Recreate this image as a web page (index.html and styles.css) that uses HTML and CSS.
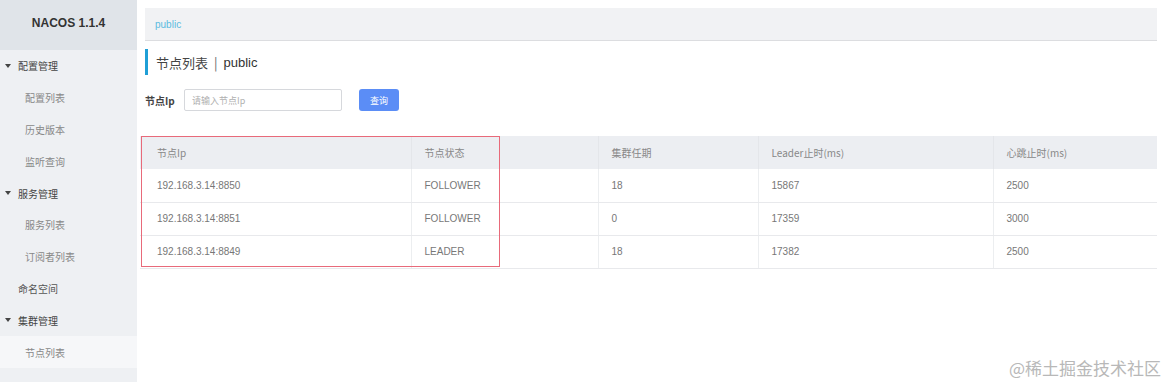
FILE: index.html
```html
<!DOCTYPE html>
<html lang="zh-CN">
<head>
<meta charset="utf-8">
<title>NACOS 1.1.4</title>
<link rel="stylesheet" href="styles.css">
</head>
<body>
<div class="app">
  <aside class="sidebar">
    <div class="brand">NACOS 1.1.4</div>
    <ul class="menu">
      <li class="group"><span class="caret"></span>配置管理</li>
      <li class="sub">配置列表</li>
      <li class="sub">历史版本</li>
      <li class="sub">监听查询</li>
      <li class="group"><span class="caret"></span>服务管理</li>
      <li class="sub">服务列表</li>
      <li class="sub">订阅者列表</li>
      <li class="top">命名空间</li>
      <li class="group"><span class="caret"></span>集群管理</li>
      <li class="sub active">节点列表</li>
    </ul>
  </aside>
  <main class="main">
    <div class="crumb">public</div>
    <h1 class="title">节点列表 <span class="sep">|</span> <span class="ns">public</span></h1>
    <div class="search">
      <label class="search-label">节点Ip</label>
      <input class="search-input" type="text" placeholder="请输入节点Ip">
      <button class="search-btn">查询</button>
    </div>
    <div class="table-wrap">
      <table class="table">
        <thead>
          <tr>
            <th class="c1">节点Ip</th>
            <th class="c2">节点状态</th>
            <th class="c3">集群任期</th>
            <th class="c4">Leader止时(ms)</th>
            <th class="c5">心跳止时(ms)</th>
          </tr>
        </thead>
        <tbody>
          <tr><td class="c1">192.168.3.14:8850</td><td>FOLLOWER</td><td>18</td><td>15867</td><td>2500</td></tr>
          <tr><td class="c1">192.168.3.14:8851</td><td>FOLLOWER</td><td>0</td><td>17359</td><td>3000</td></tr>
          <tr><td class="c1">192.168.3.14:8849</td><td>LEADER</td><td>18</td><td>17382</td><td>2500</td></tr>
        </tbody>
      </table>
      <div class="highlight"></div>
    </div>
    <div class="watermark">@稀土掘金技术社区</div>
  </main>
</div>
</body>
</html>
```

FILE: styles.css
```css
* { box-sizing: border-box; }
html, body {
  margin: 0;
  padding: 0;
  background: #fff;
  width: 1170px;
  height: 386px;
  overflow: hidden;
  font-family: "Liberation Sans", "Noto Sans CJK SC", sans-serif;
}
.app {
  display: flex;
  height: 386px;
}
.sidebar {
  width: 137px;
  height: 382px;
  background: #eef0f3;
  flex: none;
}
.brand {
  height: 50px;
  background: #e0e4e9;
  display: flex;
  align-items: center;
  justify-content: center;
  font-size: 12px;
  font-weight: bold;
  color: #333;
  padding-bottom: 5px;
}
.menu {
  list-style: none;
  margin: 0;
  padding: 0;
}
.menu li {
  height: 31.8px;
  display: flex;
  align-items: center;
  font-size: 10px;
  color: #888;
  font-family: "Noto Sans CJK SC", sans-serif;
}
.menu .group {
  padding-left: 5px;
  color: #444;
}
.caret {
  width: 0;
  height: 0;
  border-left: 3px solid transparent;
  border-right: 3px solid transparent;
  border-top: 4px solid #444;
  margin-right: 7px;
}
.menu .sub { padding-left: 25px; }
.menu .top { padding-left: 18px; color: #555; }
.menu .active { background: #f6f7f9; }

.main {
  flex: 1;
  padding: 8px 13px 0 3px;
  position: relative;
}
.crumb {
  margin-left: 5px;
  height: 33px;
  background: #f1f2f4;
  border-bottom: 1px solid #dcdde0;
  display: flex;
  align-items: center;
  padding-left: 10px;
  font-size: 10px;
  color: #5cbbe0;
}
.title {
  margin: 8px 0 0 5px;
  height: 26px;
  border-left: 3px solid #1f9fd6;
  padding-left: 8px;
  display: flex;
  align-items: center;
  font-size: 13px;
  font-weight: normal;
  color: #444;
  font-family: "Noto Sans CJK SC", sans-serif;
}
.sep { margin: 0 6px; color: #666; }
.ns { font-family: "Liberation Sans", sans-serif; color: #333; }
.search {
  margin: 14px 0 0 5px;
  display: flex;
  align-items: center;
  height: 22px;
}
.search-label {
  font-size: 10px;
  font-weight: bold;
  color: #444;
  width: 39px;
  font-family: "Noto Sans CJK SC", sans-serif;
}
.search-input {
  width: 158px;
  height: 22px;
  border: 1px solid #d6d8dc;
  border-radius: 2px;
  padding: 0 7px;
  font-size: 9px;
  font-family: "Noto Sans CJK SC", sans-serif;
  outline: none;
}
.search-input::placeholder { color: #b0b0b0; }
.search-btn {
  margin-left: 17px;
  width: 40px;
  height: 22px;
  border: none;
  border-radius: 3px;
  background: #5b8df6;
  color: #fff;
  font-size: 9px;
  font-family: "Noto Sans CJK SC", sans-serif;
  padding: 0;
}
.table-wrap {
  margin-top: 25px;
  position: relative;
}
.table {
  width: 100%;
  border-collapse: collapse;
  table-layout: fixed;
  font-size: 10px;
  color: #777;
}
.table th, .table td {
  height: 33px;
  text-align: left;
  padding: 0 0 0 13px;
  border-bottom: 1px solid #e8e9ec;
  border-left: 1px solid #eceef0;
  font-weight: normal;
  white-space: nowrap;
}
.table th {
  background: #eceef2;
  font-family: "Noto Sans CJK SC", sans-serif;
  color: #888;
  border-left-color: #e4e6ea;
  border-bottom: none;
}
.table th.c1, .table td.c1 { padding-left: 17px; border-left: none; }
.c1 { width: 271px; }
.c2 { width: 187px; }
.c3 { width: 160px; }
.c4 { width: 235px; }
.highlight {
  position: absolute;
  left: 1px;
  top: 0;
  width: 359px;
  height: 131px;
  border: 1px solid #e86a7a;
  pointer-events: none;
}
.watermark {
  position: absolute;
  right: 9px;
  top: 355px;
  font-size: 17px;
  color: #b8b8b8;
  font-family: "Noto Sans CJK SC", sans-serif;
}
```
